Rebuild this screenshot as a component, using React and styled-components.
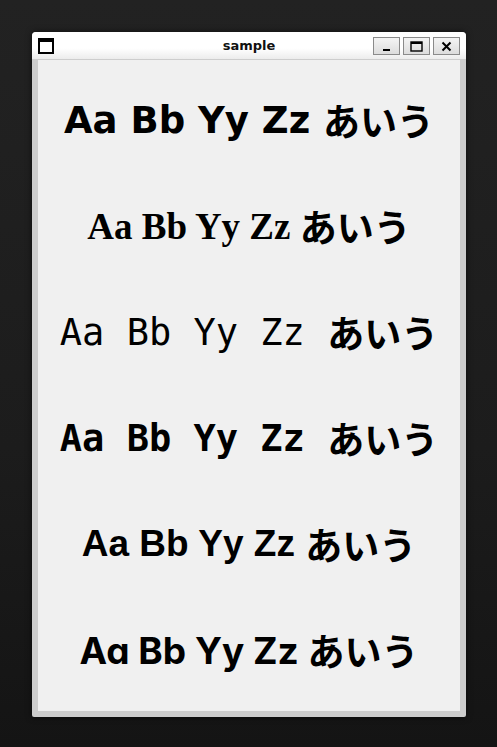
import React from "react";
import styled, { createGlobalStyle } from "styled-components";

const Global = createGlobalStyle`
  html, body { margin: 0; padding: 0; }
  body {
    width: 497px;
    height: 747px;
    background: linear-gradient(#222 0%, #1c1c1c 60%, #141414 100%);
    overflow: hidden;
  }
`;

const Stage = styled.div`
  width: 497px;
  height: 747px;
  padding: 32px 31px 30px 32px;
  box-sizing: border-box;
  display: flex;
`;

const Win = styled.div`
  flex: 1;
  display: flex;
  flex-direction: column;
  background: #cdcdcd;
  border-radius: 4px 4px 2px 2px;
  box-shadow: 0 0 6px rgba(0, 0, 0, 0.6);
  overflow: hidden;
`;

const TitleBar = styled.div`
  height: 27px;
  flex: none;
  display: flex;
  align-items: center;
  padding: 0 6px;
  background: linear-gradient(#ffffff 0%, #ffffff 60%, #ececec 100%);
  position: relative;
`;

const AppIcon = styled.div`
  width: 12px;
  height: 10px;
  border: 2px solid #000;
  border-top-width: 4px;
  background: #fff;
  margin-top: 1px;
`;

const Title = styled.div`
  position: absolute;
  left: 0;
  right: 0;
  text-align: center;
  font-family: "DejaVu Sans", sans-serif;
  font-weight: bold;
  font-size: 13px;
  color: #111;
  pointer-events: none;
`;

const Buttons = styled.div`
  margin-left: auto;
  display: flex;
  gap: 3px;
  margin-top: 1px;
`;

const Btn = styled.div`
  width: 25px;
  height: 16px;
  border: 1px solid #8a8a8a;
  background: linear-gradient(#f4f4f4, #dcdcdc);
  display: flex;
  align-items: center;
  justify-content: center;
`;

const Client = styled.div`
  flex: 1;
  margin: 1px 6px 6px 6px;
  background: #f0f0f0;
  display: flex;
  flex-direction: column;
  padding-top: 7px;
`;

const Row = styled.div`
  height: 106px;
  display: flex;
  align-items: center;
  justify-content: center;
  white-space: pre;
  font-size: 37px;
  color: #000;
  font-family: ${(p) => p.$family};
  font-weight: ${(p) => p.$weight || "bold"};
  font-feature-settings: ${(p) => p.$features || "normal"};
`;

const Jp = styled.span`
  font-family: "Noto Sans CJK JP", sans-serif;
  font-weight: bold;
`;

const rows = [
  { family: `"DejaVu Sans", sans-serif` },
  { family: `"Liberation Serif", serif` },
  { family: `"DejaVu Sans Mono", monospace`, weight: "normal" },
  { family: `"DejaVu Sans Mono", monospace` },
  { family: `"Liberation Sans", sans-serif` },
  { family: `"Inter", sans-serif`, features: `"cv11"` },
];

export default function App() {
  return (
    <>
      <Global />
      <Stage>
        <Win>
          <TitleBar>
            <AppIcon />
            <Title>sample</Title>
            <Buttons>
              <Btn>
                <svg width="11" height="11" viewBox="0 0 11 11">
                  <rect x="2" y="8" width="7" height="2" fill="#000" />
                </svg>
              </Btn>
              <Btn>
                <svg width="13" height="11" viewBox="0 0 13 11">
                  <rect x="1" y="1" width="11" height="9" fill="none" stroke="#000" strokeWidth="1.4" />
                  <rect x="1" y="1" width="11" height="2" fill="#000" />
                </svg>
              </Btn>
              <Btn>
                <svg width="11" height="11" viewBox="0 0 11 11">
                  <path d="M1.5 1.5 L9.5 9.5 M9.5 1.5 L1.5 9.5" stroke="#000" strokeWidth="2" />
                </svg>
              </Btn>
            </Buttons>
          </TitleBar>
          <Client>
            {rows.map((r, i) => (
              <Row key={i} $family={r.family} $weight={r.weight} $features={r.features}>
                {"Aa Bb Yy Zz "}
                <Jp>あいう</Jp>
              </Row>
            ))}
          </Client>
        </Win>
      </Stage>
    </>
  );
}
